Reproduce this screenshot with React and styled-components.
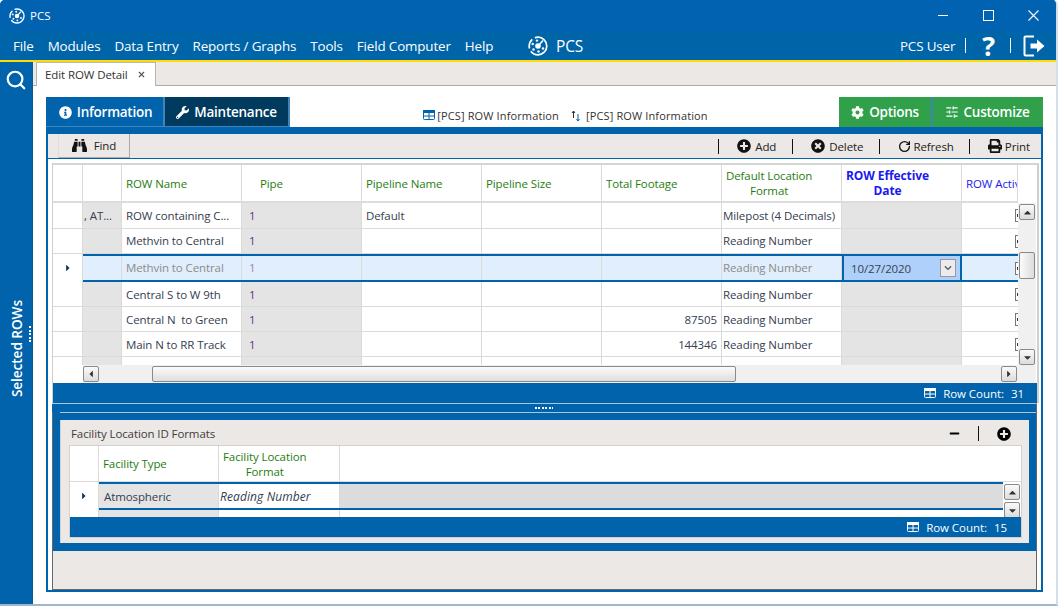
import React from "react";
import styled, { createGlobalStyle } from "styled-components";
import { FaInfoCircle, FaWrench, FaBinoculars, FaCog, FaPlusCircle, FaTimesCircle, FaPrint, FaCaretRight, FaCaretUp, FaCaretDown, FaCaretLeft, FaMinus, FaChevronDown } from "react-icons/fa";
import { Search, RotateCw, X, SlidersHorizontal } from "lucide-react";

const BLUE = "#0063AB";
const FONT = `"Open Sans", "Noto Sans", sans-serif`;

const Global = createGlobalStyle`
  html, body { margin: 0; padding: 0; width: 1058px; height: 606px; overflow: hidden; background: #fff; }
  * { box-sizing: border-box; }
  body { font-family: ${FONT}; }
`;

const Window = styled.div`
  width: 1058px; height: 606px; display: flex; flex-direction: column;
  background: ${BLUE}; border-right: 2px solid #d7dfe6; border-bottom: 2px solid #9db8cd; border-radius: 5px 5px 0 0; overflow: hidden;
`;
const TitleBar = styled.div`
  height: 31px; flex: none; display: flex; align-items: center; padding-left: 9px; color: #fff; background: #0062B0;
  font-size: 11.5px;
`;
const TitleText = styled.span` margin-left: 5px; `;
const WinControls = styled.div` margin-left: auto; display: flex; align-items: center; `;
const WinBtn = styled.div` width: 45px; height: 31px; display: flex; align-items: center; justify-content: center; color: #fff; `;
const MenuBar = styled.div`
  height: 31px; flex: none; display: flex; align-items: center; padding: 0 11px 0 13px; color: #fff; background: #0064A9;
  border-bottom: 2px solid #FFDD00; font-size: 13.4px; gap: 14px; letter-spacing: -0.14px;
`;
const CenterBrand = styled.div` position: absolute; left: 528px; top: 35px; display: flex; align-items: center; gap: 8px; font-size: 15.5px; color: #fff; `;
const MenuRight = styled.div` margin-left: auto; display: flex; align-items: center; `;
const MenuSep = styled.div` width: 1px; height: 15px; background: #fff; margin: ${p => p.$m}; `;
const Question = styled.span` font-size: 27px; font-weight: 700; line-height: 1; `;
const Body = styled.div` flex: 1; display: flex; min-height: 0; `;
const Sidebar = styled.div`
  width: 33px; flex: none; position: relative; display: flex; flex-direction: column; align-items: center; padding-top: 7px; color: #fff; background: #0063AB; border-right: 1px solid #0a5a96;
`;
const SideLabel = styled.div`
  writing-mode: vertical-rl; transform: rotate(180deg); font-size: 13.7px; font-weight: 600; margin-top: 209px; letter-spacing: -0.1px;
`;
const SideDots = styled.div`
  position: absolute; left: 29px; top: 264px; width: 2px; height: 17px;
  background: repeating-linear-gradient(to bottom, #fff 0 2px, transparent 2px 3.5px);
`;
const Main = styled.div` flex: 1; background: #fff; display: flex; flex-direction: column; min-width: 0; `;
const TabStrip = styled.div` height: 24px; flex: none; background: #ECE8E6; border-bottom: 1px solid #ababab; padding-left: 3px; display: flex; align-items: flex-end; `;
const DocTab = styled.div`
  width: 120px; height: 24px; background: #fff; border: 1px solid #b5b5b5; border-bottom: none; display: flex; align-items: center; padding: 0 8px; gap: 9px; color: #333; font-size: 11.5px; letter-spacing: -0.1px; margin-bottom: -1px;
`;
const Content = styled.div` flex: 1; padding: 11px 13px 12px 13px; display: flex; flex-direction: column; min-height: 0; `;
const TabsRow = styled.div` height: 30px; flex: none; display: flex; align-items: stretch; position: relative; `;
const MainTab = styled.div`
  width: ${p => p.$w}px; background: ${p => p.$bg}; color: #fff; display: flex; align-items: center; justify-content: center; gap: 5px; padding-left: ${p => p.$pl || 0}px;
  font-size: 13.5px; font-weight: 600; letter-spacing: -0.26px; border-right: 2px solid ${p => p.$sep || "transparent"};
  box-shadow: inset 0 -1px 0 ${p => p.$line || "transparent"};
`;
const LinksRow = styled.div` flex: 1; display: flex; align-items: flex-end; justify-content: center; padding: 0 0 4px 2px; gap: 12px; font-size: 11px; color: #333; `;
const LinkItem = styled.div` display: flex; align-items: center; gap: 2px; letter-spacing: 0.13px; `;
const Outer = styled.div` flex: 1; min-height: 0; border: 2px solid ${BLUE}; border-top-width: 7px; display: flex; flex-direction: column; `;
const Toolbar = styled.div` height: 25px; flex: none; background: #ECE8E6; border-bottom: 1px solid ${BLUE}; display: flex; align-items: center; font-size: 11.5px; color: #222; letter-spacing: -0.1px; padding-right: 11px; `;
const FindBtn = styled.div` margin-left: 10px; width: 72px; height: 24px; border-right: 1px solid #aaa; border-bottom: 1px solid #aaa; border-left: 1px solid #ddd; display: flex; align-items: center; justify-content: center; gap: 7px; color: #222; `;
const ToolGroup = styled.div` margin-left: auto; display: flex; align-items: center; `;
const ToolItem = styled.div` display: flex; align-items: center; gap: ${p => p.$g || 4}px; padding: 0 ${p => p.$pr || 16}px 0 18px; border-left: 1px solid #111; height: 15px; &:last-child { padding-right: 0; } `;
const Frame = styled.div` flex: 1; min-height: 0; margin: 4px 4px 0 4px; display: flex; flex-direction: column; `;
const TopPane = styled.div` height: 240px; flex: none; display: flex; flex-direction: column; border-left: 1px solid #cfcfcf; border-right: 2px solid #cfcfcf; border-top: 2px solid #d5d5d5; margin-right: -2px; `;
const GridRowWrap = styled.div` flex: 1; min-height: 0; display: flex; `;
const GridScroll = styled.div` width: 965px; flex: none; overflow: hidden; display: flex; flex-direction: column; `;
const Rows = styled.div` flex: 1; min-height: 0; overflow: hidden; `;
const COLS = "30px 39px 120px 120px 120px 120px 120px 120px 120px 56px";
const Head = styled.div` display: grid; grid-template-columns: ${COLS}; height: 38px; border-bottom: 2px solid #dcdcdc; `;
const HCell = styled.div`
  display: flex; align-items: center; justify-content: flex-start; text-align: center; white-space: nowrap; overflow: hidden;
  padding: ${p => p.$pad || "0 4px"}; font-size: ${p => p.$bold ? 12 : 11.5}px; line-height: 15px; letter-spacing: -0.1px; color: ${p => p.$blue ? "#1a1aee" : "#1f7d10"}; font-weight: ${p => p.$bold ? 700 : 400};
  border-right: 1px solid #dadada;
`;
const Row = styled.div`
  display: grid; grid-template-columns: ${COLS}; height: ${p => p.$h}px; position: relative; color: ${p => p.$sel ? "#8b8b8b" : "#35404f"}; font-size: 11.5px; letter-spacing: -0.1px;
  border-bottom: ${p => p.$sel ? "none" : "1px solid #dadada"};
  background: ${p => p.$sel ? "#E1EEFD" : "#fff"};
`;
const Cell = styled.div`
  display: flex; align-items: center; white-space: pre; overflow: hidden; padding: ${p => p.$pad || "0 4px"}; padding-bottom: ${p => p.$up || 0}px; border-right: 1px solid #dadada;
  background: ${p => p.$bg || "transparent"};
  justify-content: ${p => p.$right ? "flex-end" : "flex-start"};
  color: ${p => p.$purple ? (p.$sel ? "#a07fb0" : "#6a2f86") : "inherit"};
  font-style: ${p => p.$it ? "italic" : "normal"};
  ${p => p.$it ? "font-size: 12px; letter-spacing: 0.1px;" : ""}
`;
const SelLine = styled.div` position: absolute; left: ${p => p.$left}px; right: 0; height: 2px; background: ${BLUE}; ${p => p.$bottom ? "bottom: 0;" : "top: 0;"} z-index: 2; `;
const DateCell = styled.div`
  background: #AFD0FA; border: 2px solid ${BLUE}; display: flex; align-items: center; justify-content: space-between; padding: 0 4px 0 7px; color: #3a4250; z-index: 3;
`;
const DateBtn = styled.div` width: 16px; height: 18px; border: 1px solid #9a9a9a; background: #ececec; display: flex; align-items: center; justify-content: center; color: #555; `;
const Check = styled.div`
  width: 13px; height: 13px; border: 1px solid #777; background: #fff; margin-left: 53px; flex: none; position: relative;
  &::after { content: ""; position: absolute; left: 1px; top: 4px; width: 3px; height: 3px; background: #333; }
`;
const CheckCell = styled.div` display: flex; align-items: center; overflow: hidden; `;
const RowHeadMark = styled.div` display: flex; align-items: center; justify-content: center; color: #12355b; background: #fff; border-right: 1px solid #dadada; z-index: 3; `;
const HScroll = styled.div` height: 18px; flex: none; display: flex; `;
const HTrack = styled.div` flex: 1; background: #F0F0F0; display: flex; align-items: center; padding-right: 1px; `;
const Blank = styled.div` width: 30px; background: #fff; flex: none; `;
const SBtn = styled.div` width: 16px; height: 16px; flex: none; border: 1px solid #8a8a8a; border-radius: 2px; background: linear-gradient(#fafafa, #dcdcdc); display: flex; align-items: center; justify-content: center; color: #333; `;
const HThumb = styled.div` width: 584px; height: 16px; margin-left: 53px; margin-right: auto; border: 1px solid #8a8a8a; border-radius: 2px; background: linear-gradient(#fbfbfb, #dedede); `;
const VScroll = styled.div` width: 18px; flex: none; background: #F0F0F0; display: flex; flex-direction: column; align-items: center; `;
const VHead = styled.div` height: 38px; width: 18px; flex: none; background: #fff; `;
const VThumb = styled.div` width: 16px; height: 27px; margin-top: ${p => p.$top}px; margin-bottom: auto; border: 1px solid #8a8a8a; border-radius: 2px; background: linear-gradient(to right, #fbfbfb, #dcdcdc); `;
const CountBar = styled.div` height: 20px; flex: none; background: ${BLUE}; color: #fff; display: flex; align-items: center; justify-content: flex-end; gap: 7px; padding: 1px ${p => p.$pr}px 0 0; font-size: 11.5px; letter-spacing: -0.05px; `;
const Splitter = styled.div` height: 9px; flex: none; background: ${BLUE}; border-top: 1px solid #a9c6dd; border-right: 1px solid #666; display: flex; align-items: center; justify-content: center; `;
const Dots = styled.div` width: 18px; height: 2px; background: repeating-linear-gradient(to right, #fff 0 2px, transparent 2px 3.5px); `;
const BottomPane = styled.div` flex: 1; min-height: 0; display: flex; flex-direction: column; border: 1px solid #666; border-top: none; background: #ECE8E6; `;
const BlueWrap = styled.div` height: 139px; flex: none; background: ${BLUE}; padding: 8px 7px 8px 7px; display: flex; `;
const DetailPanel = styled.div` flex: 1; min-width: 0; position: relative; background: #ECE8E6; display: flex; flex-direction: column; padding: 0 7px 5px 8px; border-left: 1px solid #c8d4dd; `;
const DetailLine = styled.div` position: absolute; left: -1px; right: -7px; top: -8px; height: 1px; background: #a9c6dd; `;
const DetailHead = styled.div` height: 25px; flex: none; display: flex; align-items: center; padding-left: 2px; font-size: 11.5px; color: #3c3c3c; letter-spacing: -0.1px; padding-top: 2px; `;
const DetailTools = styled.div` margin-left: auto; display: flex; align-items: center; color: #000; padding-right: 11px; `;
const DetailSep = styled.div` width: 1px; height: 15px; background: #111; margin: 0 18px; `;
const Sub = styled.div` flex: 1; min-height: 0; display: flex; flex-direction: column; background: #fff; border: 1px solid #d2d2d2; `;
const SubCols = "29px 120px 121px 1fr";
const SubHead = styled.div` display: grid; grid-template-columns: ${SubCols}; height: 36px; flex: none; border-bottom: 1px solid #dadada; `;
const SubBodyWrap = styled.div` flex: 1; display: flex; min-height: 0; overflow: hidden; `;
const SubRows = styled.div` flex: 1; min-width: 0; overflow: hidden; `;
const SubRow = styled.div` display: grid; grid-template-columns: ${SubCols}; height: ${p => p.$h}px; position: relative; color: #35404f; font-size: 11.5px; letter-spacing: -0.1px; `;
const SubV = styled.div` width: 18px; flex: none; background: #fff; display: flex; flex-direction: column; align-items: center; padding-top: 2px; gap: 2px; `;
const ArrowPair = styled.svg` margin-right: 3px; `;

function TableIcon({ color, size = 12 }) {
  return (
    <svg width={size} height={size * 0.84} viewBox="0 0 12 10" fill="none">
      <rect x="0.5" y="0.5" width="11" height="9" rx="1" stroke={color} />
      <rect x="0" y="0" width="12" height="3" fill={color} />
      <line x1="6" y1="2" x2="6" y2="10" stroke={color} />
      <line x1="0" y1="6" x2="12" y2="6" stroke={color} />
    </svg>
  );
}
function Logo({ size }) {
  return (
    <svg width={size} height={size} viewBox="0 0 20 20" fill="none">
      <circle cx="10" cy="10" r="8.8" stroke="#fff" strokeWidth="1.7" strokeDasharray="22 3 10 3 17.3 0" />
      <circle cx="10" cy="10" r="2.8" fill="#fff" />
      <line x1="10" y1="10" x2="15" y2="4.5" stroke="#fff" strokeWidth="1.6" />
      <circle cx="9" cy="4.6" r="1.2" fill="#fff" />
      <circle cx="4.7" cy="8" r="1.2" fill="#fff" />
      <circle cx="5.5" cy="13.5" r="1.2" fill="#fff" />
      <circle cx="10.5" cy="15.5" r="1.2" fill="#fff" />
      <circle cx="15" cy="12.5" r="1.2" fill="#fff" />
    </svg>
  );
}
function MinGlyph() {
  return <svg width="11" height="11" viewBox="0 0 11 11" shapeRendering="crispEdges"><line x1="0" y1="5.5" x2="10" y2="5.5" stroke="#fff" strokeWidth="1" /></svg>;
}
function MaxGlyph() {
  return <svg width="11" height="11" viewBox="0 0 11 11" shapeRendering="crispEdges" fill="none"><rect x="0.5" y="0.5" width="10" height="10" stroke="#fff" strokeWidth="1" /></svg>;
}
function CloseGlyph() {
  return <svg width="11" height="11" viewBox="0 0 11 11" fill="none"><path d="M0.5 0.5 10.5 10.5M10.5 0.5 0.5 10.5" stroke="#fff" strokeWidth="1.1" /></svg>;
}
function ExitGlyph() {
  return (
    <svg width="22" height="22" viewBox="0 0 22 22" fill="none">
      <path d="M11 1.5H2.5a1 1 0 0 0-1 1v17a1 1 0 0 0 1 1H11" stroke="#fff" strokeWidth="2" />
      <path d="M7.5 8.5h6.5V4.5L21.5 11 14 17.5v-4H7.5z" fill="#fff" />
    </svg>
  );
}

const menus = ["File", "Modules", "Data Entry", "Reports / Graphs", "Tools", "Field Computer", "Help"];
const rows = [
  { a: ", AT...", n: "ROW containing C...", pl: "Default", fmt: "Milepost (4 Decimals)", foot: "", h: 26 },
  { a: "", n: "Methvin to Central", pl: "", fmt: "Reading Number", foot: "", h: 25, up: 1 },
  { sel: true, a: "", n: "Methvin to Central", pl: "", fmt: "Reading Number", foot: "", h: 28, up: 1 },
  { a: "", n: "Central S to W 9th", pl: "", fmt: "Reading Number", foot: "", h: 25 },
  { a: "", n: "Central N  to Green", pl: "", fmt: "Reading Number", foot: "87505", h: 25 },
  { a: "", n: "Main N to RR Track", pl: "", fmt: "Reading Number", foot: "144346", h: 25 },
  { a: "", n: "", pl: "", fmt: "", foot: "", h: 25 },
];
const GRAY = "#E4E4E4";

export default function App() {
  return (
    <>
      <Global />
      <Window>
        <TitleBar>
          <Logo size={16} />
          <TitleText>PCS</TitleText>
          <WinControls>
            <WinBtn><MinGlyph /></WinBtn>
            <WinBtn><MaxGlyph /></WinBtn>
            <WinBtn><CloseGlyph /></WinBtn>
          </WinControls>
        </TitleBar>
        <MenuBar>
          {menus.map(m => <span key={m}>{m}</span>)}
          <CenterBrand><Logo size={20} />PCS</CenterBrand>
          <MenuRight>
            <span>PCS User</span>
            <MenuSep $m="0 16px 0 10px" />
            <Question>?</Question>
            <MenuSep $m="0 12px 0 15px" />
            <ExitGlyph />
          </MenuRight>
        </MenuBar>
        <Body>
          <Sidebar>
            <Search size={22} strokeWidth={2.4} />
            <SideLabel>Selected ROWs</SideLabel>
            <SideDots />
          </Sidebar>
          <Main>
            <TabStrip>
              <DocTab>Edit ROW Detail <X size={9} strokeWidth={3} color="#555" /></DocTab>
            </TabStrip>
            <Content>
              <TabsRow>
                <MainTab $w={119} $pl={2} $bg="#0063AB" $sep="#3f83b8" $line="#3f83b8"><FaInfoCircle size={13} />Information</MainTab>
                <MainTab $w={125} $bg="#003A5E" $sep="#3f83b8" $line="#3f83b8"><FaWrench size={13} />Maintenance</MainTab>
                <LinksRow>
                  <LinkItem><TableIcon color="#0063AB" />[PCS] ROW Information</LinkItem>
                  <LinkItem>
                    <ArrowPair width="10" height="12" viewBox="0 0 10 12" fill="none">
                      <path d="M2.5 8V1M1 3l1.5-2L4 3" stroke="#333" strokeWidth="1" />
                      <path d="M7 4v7M5.5 9 7 11l1.5-2" stroke="#0063AB" strokeWidth="1" />
                    </ArrowPair>
                    [PCS] ROW Information
                  </LinkItem>
                </LinksRow>
                <MainTab $w={94} $bg="#30A04B" $sep="#3f83b8"><FaCog size={13} />Options</MainTab>
                <MainTab $w={110} $bg="#30A04B"><SlidersHorizontal size={14} />Customize</MainTab>
              </TabsRow>
              <Outer>
                <Toolbar>
                  <FindBtn><FaBinoculars size={15} color="#111" />Find</FindBtn>
                  <ToolGroup>
                    <ToolItem><FaPlusCircle size={14} color="#111" />Add</ToolItem>
                    <ToolItem><FaTimesCircle size={14} color="#111" />Delete</ToolItem>
                    <ToolItem $g={2} $pr={15}><RotateCw size={13} color="#111" strokeWidth={2.4} />Refresh</ToolItem>
                    <ToolItem $g={3}><FaPrint size={14} color="#111" />Print</ToolItem>
                  </ToolGroup>
                </Toolbar>
                <Frame>
                  <TopPane>
                    <GridRowWrap>
                      <GridScroll>
                        <Head>
                          <HCell /><HCell />
                          <HCell>ROW Name</HCell>
                          <HCell $pad="0 0 0 18px">Pipe</HCell>
                          <HCell>Pipeline Name</HCell>
                          <HCell>Pipeline Size</HCell>
                          <HCell>Total Footage</HCell>
                          <HCell>Default Location<br />Format</HCell>
                          <HCell $blue $bold>ROW Effective<br />Date</HCell>
                          <HCell $blue>ROW Active</HCell>
                        </Head>
                        <Rows>
                          {rows.map((r, i) => (
                            <Row key={i} $sel={r.sel} $h={r.h}>
                              {r.sel ? <RowHeadMark><FaCaretRight size={10} /></RowHeadMark> : <Cell />}
                              <Cell $bg={r.sel ? undefined : GRAY} $pad="0 0 0 1px">{r.a}</Cell>
                              <Cell $up={r.up}>{r.n}</Cell>
                              <Cell $up={r.up} $bg={r.sel ? undefined : GRAY} $purple $sel={r.sel} $pad="0 0 0 7px">{r.n ? "1" : ""}</Cell>
                              <Cell>{r.pl}</Cell>
                              <Cell />
                              <Cell $right>{r.foot}</Cell>
                              <Cell $up={r.up} $pad="0 0 0 1px">{r.fmt}</Cell>
                              {r.sel
                                ? <DateCell>10/27/2020<DateBtn><FaChevronDown size={8} /></DateBtn></DateCell>
                                : <Cell $bg={GRAY} />}
                              <CheckCell>{r.n && <Check />}</CheckCell>
                              {r.sel && <SelLine $left={30} />}
                              {r.sel && <SelLine $left={30} $bottom />}
                            </Row>
                          ))}
                        </Rows>
                        <HScroll>
                          <Blank />
                          <HTrack>
                            <SBtn><FaCaretLeft size={10} /></SBtn>
                            <HThumb />
                            <SBtn><FaCaretRight size={10} /></SBtn>
                          </HTrack>
                        </HScroll>
                      </GridScroll>
                      <VScroll>
                        <VHead />
                        <SBtn style={{ marginTop: 1 }}><FaCaretUp size={11} /></SBtn>
                        <VThumb $top={32} />
                        <SBtn style={{ marginBottom: 18 }}><FaCaretDown size={11} /></SBtn>
                      </VScroll>
                    </GridRowWrap>
                    <CountBar $pr={13}><TableIcon color="#fff" size={12} />Row Count: <span>31</span></CountBar>
                  </TopPane>
                  <Splitter><Dots /></Splitter>
                  <BottomPane>
                    <BlueWrap>
                      <DetailPanel>
                        <DetailLine />
                        <DetailHead>
                          Facility Location ID Formats
                          <DetailTools>
                            <FaMinus size={11} />
                            <DetailSep />
                            <FaPlusCircle size={14} />
                          </DetailTools>
                        </DetailHead>
                        <Sub>
                          <SubHead>
                            <HCell />
                            <HCell>Facility Type</HCell>
                            <HCell>Facility Location<br />Format</HCell>
                            <HCell style={{ borderRight: "none" }} />
                          </SubHead>
                          <SubBodyWrap>
                            <SubRows>
                              <SubRow $h={28}>
                                <RowHeadMark><FaCaretRight size={10} /></RowHeadMark>
                                <Cell $bg={GRAY} $pad="0 5px">Atmospheric</Cell>
                                <Cell $it $pad="0 0 0 1px">Reading Number</Cell>
                                <Cell $bg="#DCDCDC" style={{ borderRight: "none" }} />
                                <SelLine $left={29} />
                                <SelLine $left={29} $bottom />
                              </SubRow>
                              <SubRow $h={8}>
                                <Cell />
                                <Cell $bg={GRAY} />
                                <Cell />
                                <Cell style={{ borderRight: "none" }} />
                              </SubRow>
                            </SubRows>
                            <SubV>
                              <SBtn><FaCaretUp size={11} /></SBtn>
                              <SBtn><FaCaretDown size={11} /></SBtn>
                            </SubV>
                          </SubBodyWrap>
                          <CountBar $pr={14}><TableIcon color="#fff" size={12} />Row Count: <span>15</span></CountBar>
                        </Sub>
                      </DetailPanel>
                    </BlueWrap>
                  </BottomPane>
                </Frame>
              </Outer>
            </Content>
          </Main>
        </Body>
      </Window>
    </>
  );
}
